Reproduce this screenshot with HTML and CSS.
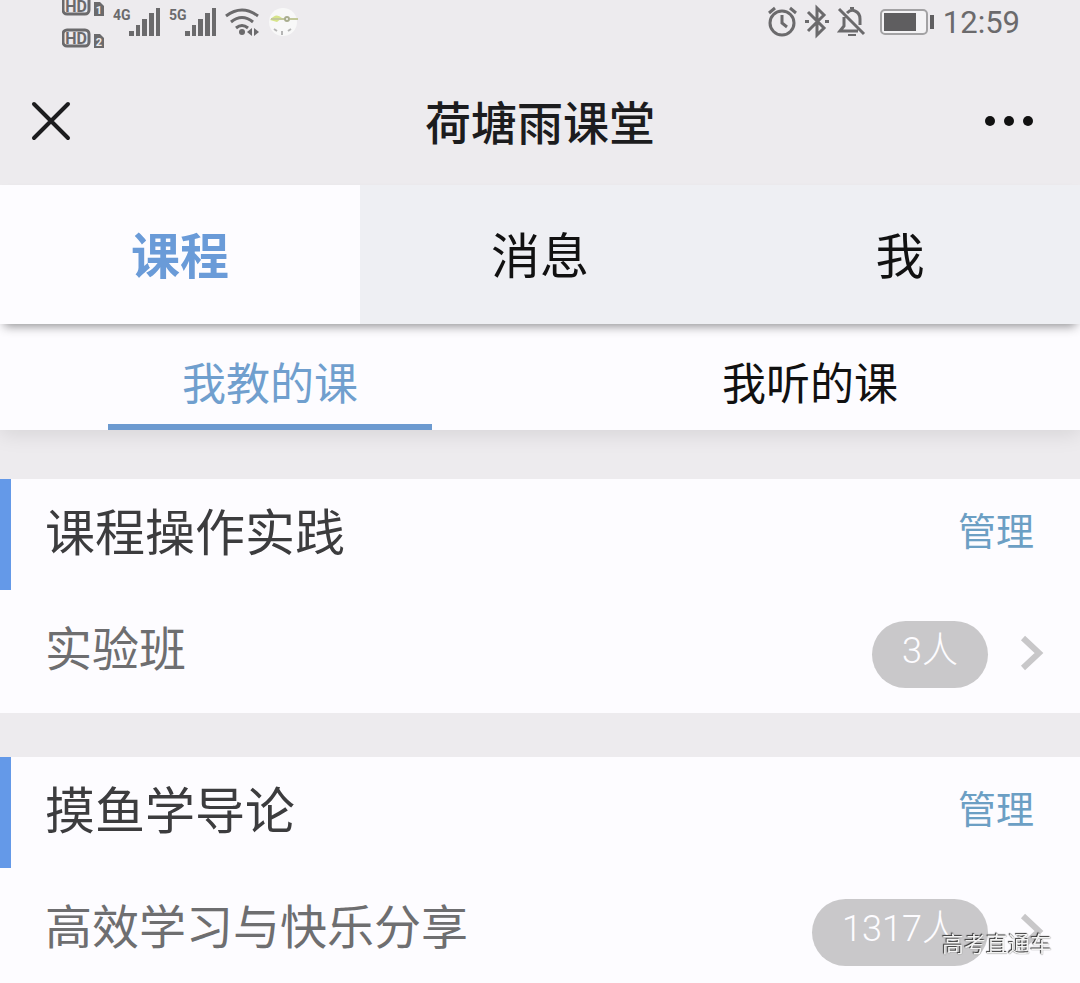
FILE: index.html
```
<!DOCTYPE html>
<html lang="zh-CN">
<head>
    <title>荷塘雨课堂</title>
    <meta charset="utf-8">
    <meta name="viewport" content="width=device-width, initial-scale=1">
    <link rel="stylesheet" href="styles.css">
</head>
<body>

<div class="status">
    <div class="status-left">
        <svg class="hd" width="43" height="49" viewBox="62 0 43 49">
            <rect x="63" y="-4" width="26" height="18" rx="4" fill="none" stroke="#6b6a6c" stroke-width="3"/>
            <text x="76" y="12" class="hd-text">HD</text>
            <path d="M94 2h6l4 4v10H94z" fill="#6b6a6c"/>
            <text x="99" y="14" class="sim-text">1</text>
            <rect x="63" y="30" width="26" height="16" rx="4" fill="none" stroke="#6b6a6c" stroke-width="3"/>
            <text x="76" y="44" class="hd-text">HD</text>
            <path d="M94 34h6l4 4v10H94z" fill="#6b6a6c"/>
            <text x="99" y="46" class="sim-text">2</text>
        </svg>
        <svg width="48" height="44" viewBox="113 0 48 44">
            <text x="113" y="20" class="net-text">4G</text>
            <path d="M129 31h5v5h-5zM136 25h4v11h-4zM142 19h5v17h-5zM149 13h5v23h-5zM156 8h4v28h-4z" fill="#6b6a6c"/>
        </svg>
        <svg width="48" height="44" viewBox="113 0 48 44">
            <text x="113" y="20" class="net-text">5G</text>
            <path d="M129 31h5v5h-5zM136 25h4v11h-4zM142 19h5v17h-5zM149 13h5v23h-5zM156 8h4v28h-4z" fill="#6b6a6c"/>
        </svg>
        <svg width="36" height="44" viewBox="225 0 36 44">
            <path d="M226 16q16-12 32 0M231 22q11-9 22 0M236 28q6-5 12 0" fill="none" stroke="#6b6a6c" stroke-width="3"/>
            <circle cx="242" cy="32" r="3" fill="#6b6a6c"/>
            <path d="M252 28v8l-5-4zM254 28v8l5-4z" fill="#6b6a6c"/>
        </svg>
        <svg width="32" height="44" viewBox="269 0 32 44">
            <circle cx="283" cy="22" r="14" fill="#f8f8f8"/>
            <path d="M270 20q6-8 12-2l-5 4z" fill="#d7e58b"/>
            <path d="M271 19h14M290 19h8" stroke="#c3c99a" stroke-width="2"/>
            <circle cx="287" cy="19" r="2" fill="none" stroke="#a9ad8f" stroke-width="2"/>
            <path d="M274 29l3 2M282 31v4M291 29l-3 2" stroke="#b5b5b5" stroke-width="2"/>
        </svg>
    </div>
    <div class="status-right">
        <svg width="30" height="44" viewBox="767 0 30 44">
            <g fill="none" stroke="#6b6a6c" stroke-width="3">
                <circle cx="782" cy="23" r="12"/>
                <path d="M782 15v8l5 4M769 13l6-5M796 13l-6-5"/>
            </g>
        </svg>
        <svg width="24" height="44" viewBox="805 0 24 44">
            <path d="M808 12l16 16-7 7V8l7 7-16 16" fill="none" stroke="#6b6a6c" stroke-width="3"/>
            <path d="M805 20h4v3h-4zM825 20h4v3h-4z" fill="#6b6a6c"/>
        </svg>
        <svg width="30" height="44" viewBox="837 0 30 44">
            <g fill="none" stroke="#6b6a6c" stroke-width="3">
                <path d="M839 9l25 25M844 17v9l-4 5h18M847 13q4-4 8-2 5 2 5 8v6"/>
                <path d="M848 35h8M850 8h4" stroke-width="2"/>
            </g>
        </svg>
        <svg class="battery" width="56" height="44" viewBox="878 0 56 44">
            <rect x="880" y="10" width="46" height="24" rx="4" fill="#f4f3f5" stroke="#a3a2a4" stroke-width="2"/>
            <path d="M883 13h32v18h-32zM929 15h4v14h-4z" fill="#5f5e60"/>
        </svg>
        <span class="clock">12:59</span>
    </div>
</div>

<header class="header">
    <button class="icon-btn" type="button" aria-label="关闭">
        <svg width="40" height="40" viewBox="0 0 40 40">
            <path d="M3 3l34 34M37 3L3 37" stroke="#1c1c1e" stroke-width="4" stroke-linecap="round"/>
        </svg>
    </button>
    <h1>荷塘雨课堂</h1>
    <button class="icon-btn more" type="button" aria-label="更多">
        <svg width="50" height="12" viewBox="0 0 50 12">
            <g fill="#111">
                <circle cx="6" cy="6" r="5"/>
                <circle cx="25" cy="6" r="5"/>
                <circle cx="44" cy="6" r="5"/>
            </g>
        </svg>
    </button>
</header>

<nav class="tabs">
    <button class="tab active" type="button">课程</button>
    <button class="tab" type="button">消息</button>
    <button class="tab" type="button">我</button>
</nav>

<nav class="subtabs">
    <button class="subtab active" type="button">我教的课</button>
    <button class="subtab" type="button">我听的课</button>
</nav>

<main class="courses">
    <section class="course">
        <div class="course-head">
            <h2>课程操作实践</h2>
            <a href="#manage1">管理</a>
        </div>
        <a class="course-class" href="#class1">
            <span class="name">实验班</span>
            <span class="count">3人</span>
            <svg class="arrow" width="24" height="36" viewBox="0 0 24 36">
                <path d="M3 3l16 15L3 33" fill="none" stroke="#c8c7c9" stroke-width="6"/>
            </svg>
        </a>
    </section>

    <section class="course">
        <div class="course-head">
            <h2>摸鱼学导论</h2>
            <a href="#manage2">管理</a>
        </div>
        <a class="course-class" href="#class2">
            <span class="name">高效学习与快乐分享</span>
            <span class="count">1317人</span>
            <svg class="arrow" width="24" height="36" viewBox="0 0 24 36">
                <path d="M3 3l16 15L3 33" fill="none" stroke="#c8c7c9" stroke-width="6"/>
            </svg>
        </a>
    </section>
</main>

<div class="watermark">高考直通车</div>

</body>
</html>
```

FILE: styles.css
```
* {
    box-sizing: border-box;
}

body {
    margin: 0;
    background: #edebee;
    color: #1c1c1e;
    font-family: Roboto, "Noto Sans CJK SC", sans-serif;
}

svg {
    display: block;
    flex-shrink: 0;
}

button {
    border: 0;
    padding: 0;
    background: none;
    color: inherit;
    font-family: inherit;
    cursor: pointer;
}

a {
    text-decoration: none;
}

h1, h2 {
    margin: 0;
}

/* phone status bar */
.status {
    display: flex;
    justify-content: space-between;
    height: 57px;
    padding: 0 60px 0 62px;
}

.status-left, .status-right {
    display: flex;
    align-items: flex-start;
    gap: 8px;
}

.battery {
    margin-left: 4px;
}

.hd-text {
    font: bold 16px Roboto, sans-serif;
    text-anchor: middle;
    fill: #6b6a6c;
}

.sim-text {
    font: bold 11px Roboto, sans-serif;
    text-anchor: middle;
    fill: #edebee;
}

.net-text {
    font: bold 14px Roboto, sans-serif;
    fill: #6b6a6c;
}

.clock {
    color: #6b6a6c;
    font-size: 31px;
    line-height: 46px;
}

/* title bar */
.header {
    display: grid;
    grid-template-columns: 1fr auto 1fr;
    align-items: center;
    height: 128px;
    padding: 0 46px 0 46px;
}

.header h1 {
    padding-top: 6px;
    font-size: 46px;
    font-weight: 500;
    line-height: 64px;
}

.icon-btn {
    display: flex;
    align-items: center;
    margin-left: -15px;
}

.icon-btn.more {
    justify-self: end;
}

.tabs {
    position: relative;
    z-index: 1;
    display: grid;
    grid-template-columns: repeat(3, 1fr);
    background: #eeeff3;
    box-shadow: 0 6px 10px -4px rgba(0, 0, 0, 0.45);
}

.tab {
    height: 139px;
    padding-bottom: 4px;
    color: #111;
    font-size: 49px;
}

.tab.active {
    background: #fdfcff;
    color: #6a9bd8;
    font-weight: bold;
}

.subtabs {
    display: grid;
    grid-template-columns: repeat(2, 1fr);
    justify-items: center;
    background: #fdfcff;
    box-shadow: 0 4px 20px rgba(0, 0, 0, 0.1);
}

.subtab {
    width: 60%;
    height: 106px;
    padding-top: 14px;
    border-bottom: 6px solid transparent;
    color: #111;
    font-size: 44px;
}

.subtab.active {
    border-color: #6c9ad0;
    color: #709fce;
}

.courses {
    display: flex;
    flex-direction: column;
    gap: 44px;
    padding-top: 49px;
}

.course {
    background: #fdfcff;
}

.course-head {
    display: flex;
    align-items: center;
    justify-content: space-between;
    height: 111px;
    padding: 0 46px 12px 34px;
    border-left: 11px solid #6499e8;
}

.course-head h2 {
    color: #3c3c3e;
    font-size: 50px;
    font-weight: normal;
}

.course-head a {
    color: #6c9fc4;
    font-size: 38px;
}

.course-class {
    display: flex;
    align-items: center;
    padding: 31px 36px 25px 45px;
    color: #6e6e70;
}

.course:last-child .course-class {
    padding-bottom: 17px;
}

.name {
    flex: 1;
    padding-bottom: 10px;
    font-size: 47px;
    line-height: 56px;
}

.count {
    margin-right: 32px;
    padding: 0 30px 7px;
    border-radius: 34px;
    background: #c9c8ca;
    color: #fdfcff;
    font-size: 36px;
    font-weight: 300;
    line-height: 60px;
}

.arrow {
    margin-bottom: 4px;
}

.watermark {
    position: fixed;
    right: 28px;
    bottom: 22px;
    z-index: 2;
    color: #f4f4f4;
    font-size: 22px;
    line-height: 32px;
    text-shadow: -1px -1px 1px #333, 0 0 1px #555;
}
```
